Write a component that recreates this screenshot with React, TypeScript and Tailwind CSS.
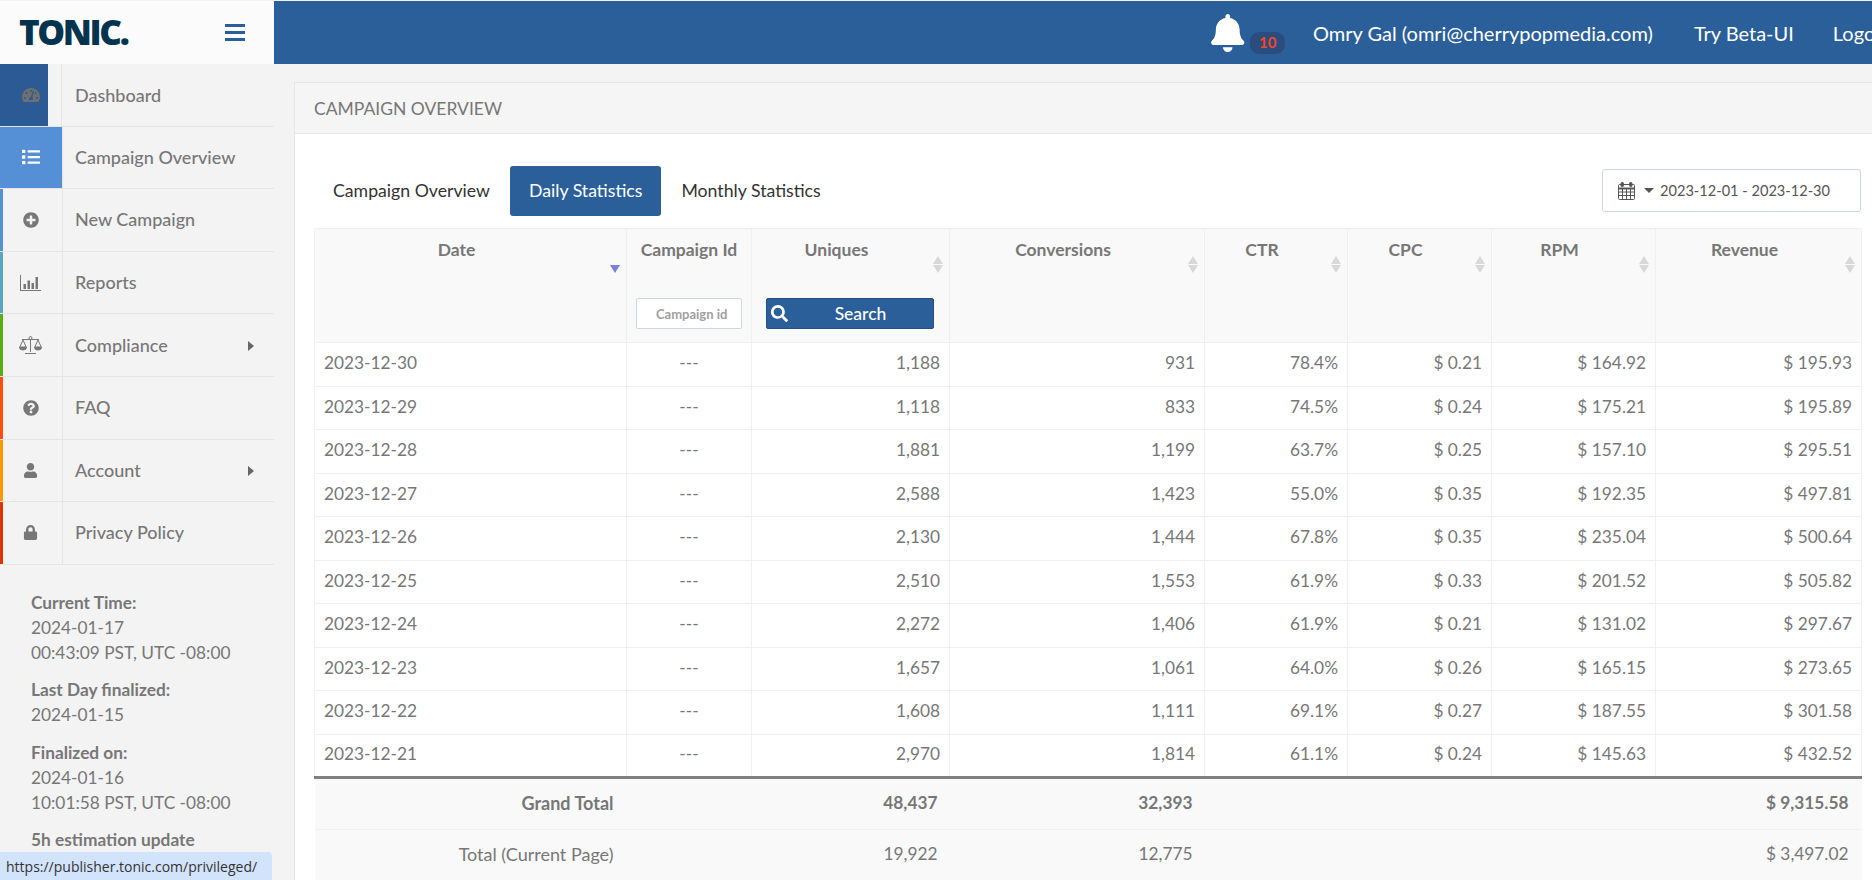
import {
  FaBell,
  FaList,
  FaLock,
  FaPlusCircle,
  FaQuestionCircle,
  FaSearch,
  FaTachometerAlt,
  FaUser,
} from "react-icons/fa";
import { ReactNode } from "react";

const ChartIcon = () => (
  <svg width="21" height="16" viewBox="0 0 21 16" fill="currentColor">
    <path d="M0 0h1v15h20v1H0z" />
    <path d="M3.5 9h2.5v5H3.5zM7.5 5.5H10V14H7.5zM11.5 8H14v6h-2.5zM15.5 2H18v12h-2.5z" />
  </svg>
);

const ScaleIcon = () => (
  <svg width="23" height="19" viewBox="0 0 23 19" fill="none" stroke="currentColor" strokeWidth="1">
    <path d="M11.5 3v13M6 17.5h11M3 3.5h17" />
    <circle cx="11.5" cy="2" r="1.5" />
    <path d="M4 4 0.8 11h6.4zM19 4l-3.200 7h6.400z" />
    <path d="M0.5 11.500a3.500 2.500 0 0 0 7 0zM15.500 11.500a3.500 2.500 0 0 0 7 0z" fill="currentColor" />
  </svg>
);

const CalendarIcon = () => (
  <svg width="17" height="18" viewBox="0 0 17 18" fill="none" stroke="#555" strokeWidth="1">
    <rect x="0.5" y="2.5" width="16" height="15" rx="1" />
    <path d="M0.5 6.5h16" strokeWidth="2" />
    <path d="M0.5 10h16M0.5 13.500h16M4.500 6v11.500M8.500 6v11.500M12.500 6v11.500" />
    <rect x="3" y="0.5" width="2.5" height="4" rx="1" fill="#555" />
    <rect x="11.5" y="0.5" width="2.5" height="4" rx="1" fill="#555" />
  </svg>
);

type NavItem = {
  label: string;
  icon: ReactNode;
  strip: string;
  arrow?: boolean;
};

const navItems: NavItem[] = [
  { label: "New Campaign", icon: <FaPlusCircle size={16} />, strip: "bg-[#5590d6]" },
  { label: "Reports", icon: <ChartIcon />, strip: "bg-[#5ba4c6]" },
  { label: "Compliance", icon: <ScaleIcon />, strip: "bg-[#5aad14]", arrow: true },
  { label: "FAQ", icon: <FaQuestionCircle size={16} />, strip: "bg-[#ff4e0d]" },
  { label: "Account", icon: <FaUser size={15} />, strip: "bg-[#ff9900]", arrow: true },
  { label: "Privacy Policy", icon: <FaLock size={15} />, strip: "bg-[#dd3300]" },
];

const rows = [
  ["2023-12-30", "1,188", "931", "78.4%", "$ 0.21", "$ 164.92", "$ 195.93"],
  ["2023-12-29", "1,118", "833", "74.5%", "$ 0.24", "$ 175.21", "$ 195.89"],
  ["2023-12-28", "1,881", "1,199", "63.7%", "$ 0.25", "$ 157.10", "$ 295.51"],
  ["2023-12-27", "2,588", "1,423", "55.0%", "$ 0.35", "$ 192.35", "$ 497.81"],
  ["2023-12-26", "2,130", "1,444", "67.8%", "$ 0.35", "$ 235.04", "$ 500.64"],
  ["2023-12-25", "2,510", "1,553", "61.9%", "$ 0.33", "$ 201.52", "$ 505.82"],
  ["2023-12-24", "2,272", "1,406", "61.9%", "$ 0.21", "$ 131.02", "$ 297.67"],
  ["2023-12-23", "1,657", "1,061", "64.0%", "$ 0.26", "$ 165.15", "$ 273.65"],
  ["2023-12-22", "1,608", "1,111", "69.1%", "$ 0.27", "$ 187.55", "$ 301.58"],
  ["2023-12-21", "2,970", "1,814", "61.1%", "$ 0.24", "$ 145.63", "$ 432.52"],
];

const SortArrows = ({ active }: { active?: boolean }) =>
  active ? (
    <span className="absolute right-[6px] top-[36px] h-0 w-0 border-x-[5px] border-t-[8px] border-x-transparent border-t-[#7b7fd6]" />
  ) : (
    <span className="absolute right-[6px] top-[27px] flex flex-col gap-[1px]">
      <span className="h-0 w-0 border-x-[5px] border-b-[8px] border-x-transparent border-b-[#d8d8d8]" />
      <span className="h-0 w-0 border-x-[5px] border-t-[8px] border-x-transparent border-t-[#d8d8d8]" />
    </span>
  );

const HeadCell = ({ label, w, children, active, noSort }: { label: string; w: string; children?: ReactNode; active?: boolean; noSort?: boolean }) => (
  <th className={`relative h-[114px] border border-[#f0f0f0] align-top pt-[9px] text-center font-bold ${w} ${noSort ? "" : "pr-7"}`}>
    <div className="h-[24px] leading-[24px]">{label}</div>
    {children}
    {!noSort && <SortArrows active={active} />}
  </th>
);

export default function App() {
  return (
    <div className="flex h-screen flex-col overflow-hidden bg-[#f3f3f3] font-['Lato',sans-serif] text-[17.5px] text-[#777777]">
      <header className="mt-[1px] flex h-[63px] shrink-0">
        <div className="flex w-[274px] shrink-0 items-center justify-between bg-[#fbfbfb] pl-[19px] pr-[29px]">
          <span className="font-['Open_Sans',sans-serif] text-[35px] font-extrabold tracking-[-2.4px] text-[#02344f]">TONIC.</span>
          <span className="flex w-[20px] flex-col gap-[4px]">
            <span className="h-[3px] bg-[#2b5f99]" />
            <span className="h-[3px] bg-[#2b5f99]" />
            <span className="h-[3px] bg-[#2b5f99]" />
          </span>
        </div>
        <div className="flex min-w-0 flex-1 items-center overflow-hidden whitespace-nowrap bg-[#2b5f99] pl-[935px] text-[20px] text-white">
          <span className="relative flex w-[76px] shrink-0 items-center">
            <FaBell size={38} className="text-white" />
            <span className="ml-[4px] mt-[20px] flex h-[22px] w-[35px] items-center justify-center rounded-[9px] bg-[#2a4d7e] text-[15px] font-bold text-[#f0472a]">10</span>
          </span>
          <span className="ml-[28px] shrink-0">Omry Gal (omri@cherrypopmedia.com)</span>
          <span className="ml-[41px] shrink-0">Try Beta-UI</span>
          <span className="ml-[39px] shrink-0">Logout</span>
        </div>
      </header>

      <div className="flex min-h-0 flex-1">
        <aside className="relative w-[274px] shrink-0 font-medium">
          <nav className="text-[18px]">
            <div className="flex h-[62.6px] border-b border-[#e5e5e5]">
              <span className="flex w-[48px] items-center bg-[#2b5a94] pl-[22px] text-[#6f6f6f]">
                <FaTachometerAlt size={18} />
              </span>
              <span className="w-[14px] border-r border-[#e5e5e5]" />
              <span className="flex items-center pl-[13px] pt-[1px]">Dashboard</span>
            </div>
            <div className="flex h-[62.6px] border-b border-[#e5e5e5]">
              <span className="flex w-[62px] items-center justify-center bg-[#5590d6] text-white">
                <FaList size={18} />
              </span>
              <span className="flex items-center border-l border-[#e5e5e5] pl-[12px]">Campaign Overview</span>
            </div>
            {navItems.map((item) => (
              <div key={item.label} className="flex h-[62.6px] border-b border-[#e5e5e5]">
                <span className={`w-[3px] ${item.strip}`} />
                <span className="flex w-[60px] items-center justify-center border-r border-[#e5e5e5] pr-[4px] text-[#777777]">{item.icon}</span>
                <span className="flex flex-1 items-center justify-between pl-[12px] pr-[20px]">
                  {item.label}
                  {item.arrow && <span className="mt-[2px] h-0 w-0 border-y-[5px] border-l-[6px] border-y-transparent border-l-[#666666]" />}
                </span>
              </div>
            ))}
          </nav>
          <div className="pl-[31px] pt-[25px] text-[17.3px] leading-[25px] font-normal">
            <p className="font-bold">Current Time:</p>
            <p>2024-01-17</p>
            <p>00:43:09 PST, UTC -08:00</p>
            <p className="mt-[12.5px] font-bold">Last Day finalized:</p>
            <p>2024-01-15</p>
            <p className="mt-[12.5px] font-bold">Finalized on:</p>
            <p>2024-01-16</p>
            <p>10:01:58 PST, UTC -08:00</p>
            <p className="mt-[12.5px] font-bold">5h estimation update</p>
          </div>
        </aside>

        <main className="min-w-0 flex-1 pl-[20px] pt-[18px]">
          <section className="w-[1600px] border-l border-t border-[#e6e6e6] bg-white">
            <div className="flex h-[51px] items-center border-b border-[#e6e6e6] bg-[#f5f5f5] pl-[19px] pt-[2px] text-[17.5px] uppercase">Campaign Overview</div>
            <div className="w-[1566px] pl-[19px] pt-[32px]">
              <div className="flex h-[62px] items-start justify-between">
                <div className="flex h-[50px] items-center text-[17.7px] text-[#333333]">
                  <a className="pl-[19px] pr-[20px]">Campaign Overview</a>
                  <a className="flex h-[50px] items-center rounded-[3px] bg-[#2b5f99] px-[19px] text-white">Daily Statistics</a>
                  <a className="px-[20px]">Monthly Statistics</a>
                </div>
                <button className="mt-[3px] flex h-[43px] w-[259px] items-center rounded-[3px] border border-[#ccd5e0] pl-[15px] text-[14.6px] text-[#555555]">
                  <CalendarIcon />
                  <span className="ml-[9px] mr-[6px] h-0 w-0 border-x-[5px] border-t-[5px] border-x-transparent border-t-[#555555]" />
                  2023-12-01 - 2023-12-30
                </button>
              </div>
              <table className="w-[1547px] table-fixed border-collapse">
                <thead>
                  <tr className="bg-[#f9f9f9]">
                    <HeadCell label="Date" w="w-[312px]" active />
                    <HeadCell label="Campaign Id" w="w-[125px]" noSort>
                      <input
                        placeholder="Campaign id"
                        className="mx-auto mt-[36px] block h-[31px] w-[106px] rounded-[2px] border border-[#ccd5e0] bg-white pl-[19px] text-[13px] font-bold placeholder:text-[#a0a0a0]"
                      />
                    </HeadCell>
                    <th className="relative h-[114px] w-[198px] border border-[#f0f0f0] pr-7 pt-[9px] text-center align-top font-bold">
                      <div className="h-[24px] leading-[24px]">Uniques</div>
                      <button className="ml-[14px] mt-[36px] flex h-[31px] w-[168px] items-center rounded-[2px] border border-[#234e80] bg-[#2b5f99] pl-[4px] font-medium text-white">
                        <FaSearch size={17} />
                        <span className="flex-1 pt-[2px] text-center">Search</span>
                      </button>
                      <SortArrows />
                    </th>
                    <HeadCell label="Conversions" w="w-[255px]" />
                    <HeadCell label="CTR" w="w-[143px]" />
                    <HeadCell label="CPC" w="w-[144px]" />
                    <HeadCell label="RPM" w="w-[164px]" />
                    <HeadCell label="Revenue" w="w-[206px]" />
                  </tr>
                </thead>
                <tbody className="text-[17.3px]">
                  {rows.map((row) => (
                    <tr key={row[0]} className="h-[43.5px]">
                      <td className="border border-[#f0f0f0] pb-[2px] pl-[9px]">{row[0]}</td>
                      <td className="border border-[#f0f0f0] pb-[2px] text-center">---</td>
                      {row.slice(1).map((cell, i) => (
                        <td key={i} className="border border-[#f0f0f0] pb-[2px] pr-[9px] text-right">{cell}</td>
                      ))}
                    </tr>
                  ))}
                  <tr className="h-[52px] border-t-[3px] border-[#808080] bg-[#f9f9f9] font-bold">
                    <td className="pb-[2px] pr-[13px] text-right text-[18px]">Grand Total</td>
                    <td />
                    <td className="pb-[2px] pr-[12px] text-right">48,437</td>
                    <td className="pb-[2px] pr-[12px] text-right">32,393</td>
                    <td />
                    <td />
                    <td />
                    <td className="pb-[2px] pr-[13px] text-right">$ 9,315.58</td>
                  </tr>
                  <tr className="h-[51px] border-t border-[#f0f0f0] bg-[#f9f9f9]">
                    <td className="pb-[2px] pr-[13px] text-right text-[18px]">Total (Current Page)</td>
                    <td />
                    <td className="pb-[2px] pr-[12px] text-right">19,922</td>
                    <td className="pb-[2px] pr-[12px] text-right">12,775</td>
                    <td />
                    <td />
                    <td />
                    <td className="pb-[2px] pr-[13px] text-right">$ 3,497.02</td>
                  </tr>
                </tbody>
              </table>
            </div>
          </section>
        </main>
      </div>

      <div className="fixed bottom-0 left-0 flex h-[28px] w-[272px] items-center rounded-tr-[4px] bg-[#d2e3fc] pl-[6px] font-['Open_Sans',sans-serif] text-[14px] text-[#333333]">
        https://publisher.tonic.com/privileged/
      </div>
    </div>
  );
}
